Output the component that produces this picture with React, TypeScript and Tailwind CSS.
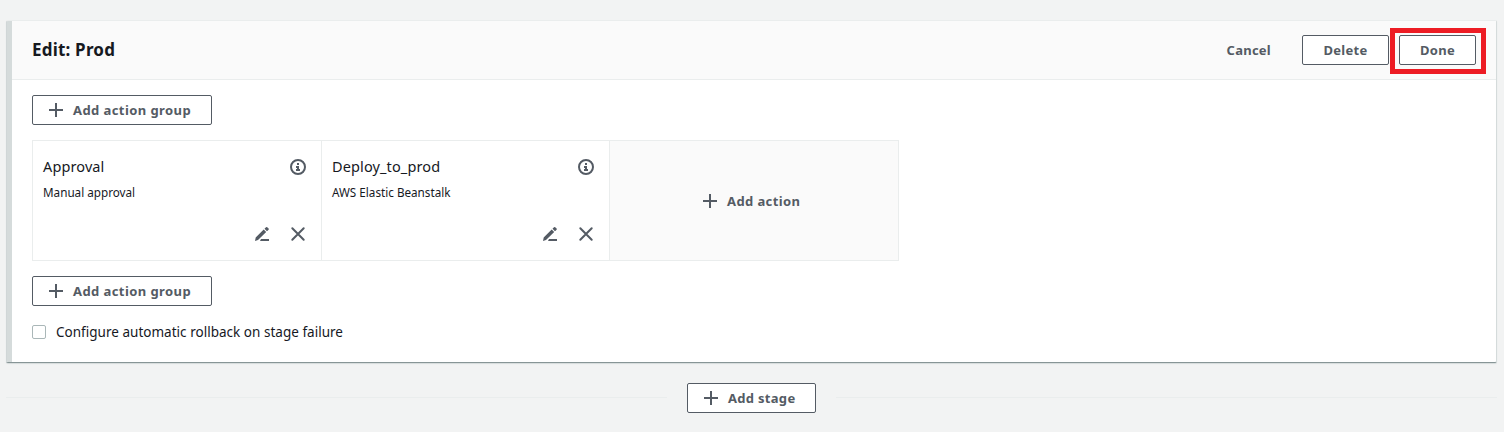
import type { ReactNode } from "react";

function PlusIcon() {
  return (
    <svg className="h-4 w-4 shrink-0" viewBox="0 0 16 16" fill="none" stroke="#545b64" strokeWidth="2" shapeRendering="crispEdges">
      <path d="M8 1v14M1 8h14" />
    </svg>
  );
}

function InfoIcon() {
  return (
    <svg className="h-4 w-4" viewBox="0 0 16 16" fill="none">
      <circle cx="8" cy="8" r="7" stroke="#545b64" strokeWidth="2" />
      <path d="M7 4h2v2H7zM6 7h3v3h1v2H6v-2h1V9H6z" fill="#545b64" />
    </svg>
  );
}

function EditIcon() {
  return (
    <svg className="h-4 w-4" viewBox="0 0 16 16">
      <path d="M1 15l.7-3.6 8-7.9 2.5 2.5-8.2 8zM10.5 2.7L12 1.2q.6-.5 1.2 0l1.4 1.4q.5.5 0 1.1L13 5.2z" fill="#545b64" />
      <path d="M7 13h8v2H6z" fill="#545b64" />
    </svg>
  );
}

function CloseIcon() {
  return (
    <svg className="h-4 w-4" viewBox="0 0 16 16" fill="none" stroke="#545b64" strokeWidth="2" strokeLinecap="round">
      <path d="M2.3 2.3l11.4 11.4M13.7 2.3L2.3 13.7" />
    </svg>
  );
}

function Button({ className, children }: { className: string; children: ReactNode }) {
  return (
    <button
      className={`flex h-[30px] shrink-0 items-center rounded-[2px] border border-[#545b64] bg-white text-[13px] font-bold whitespace-nowrap text-[#545b64] ${className}`}
    >
      {children}
    </button>
  );
}

function AddGroupButton() {
  return (
    <Button className="w-[180px] gap-[9px] pl-[15px]">
      <PlusIcon />
      <span className="pt-[2px] tracking-[0.42px]">Add action group</span>
    </Button>
  );
}

function ActionCard({ name, provider }: { name: ReactNode; provider: ReactNode }) {
  return (
    <div className="flex flex-col justify-between border-r border-[#eaeded] pt-[18px] pr-[15px] pb-[18px] pl-[10px]">
      <div className="flex items-start justify-between">
        <div>
          <div className="h-4 text-[14.5px] leading-[14px] tracking-[0.12px]">{name}</div>
          <div className="mt-[10px] h-4 text-[11.7px] leading-[14px]">{provider}</div>
        </div>
        <InfoIcon />
      </div>
      <div className="flex justify-end gap-5">
        <EditIcon />
        <CloseIcon />
      </div>
    </div>
  );
}

export default function App() {
  return (
    <main className="h-[432px] w-[1504px] overflow-hidden bg-[#f2f3f3] pt-5 pr-[7px] pl-[6px] font-['Noto_Sans',sans-serif] text-[#16191f]">
      <section className="flex h-[343px] overflow-hidden rounded-[2px] border-t border-r border-b border-t-[#eaeded] border-r-[#d5dbdb] border-b-[#879596] bg-white shadow-[0_1px_1px_#d5dbdb]">
        <div className="w-[6px] shrink-0 border-l border-[#d0d6d7] bg-[#d5dbdb]" />
        <div className="flex-1">
          <header className="flex h-[59px] items-center justify-between border-b border-[#eaeded] bg-[#fafafa] px-5">
            <h2 className="text-[17px] leading-6 font-bold tracking-[0.2px]">Edit: Prod</h2>
            <div className="flex items-center">
              <button className="mr-[31px] pt-px text-[13px] font-bold tracking-[0.25px] text-[#545b64]">Cancel</button>
              <Button className="mr-[10px] w-[87px] justify-center pt-px tracking-[0.25px]">Delete</Button>
              <div className="relative">
                <Button className="w-[77px] justify-center pt-px tracking-[0.25px]">Done</Button>
                <div className="pointer-events-none absolute -top-[7px] -left-[9px] h-[46px] w-[96px] border-[5px] border-[#ed1c24]" />
              </div>
            </div>
          </header>
          <div className="pt-[15px] pl-5">
            <AddGroupButton />
            <div className="mt-[15px] grid h-[121px] w-[867px] grid-cols-[289px_288px_288px] border border-[#eaeded]">
              <ActionCard name="Approval" provider="Manual approval" />
              <ActionCard name="Deploy_to_prod" provider="AWS Elastic Beanstalk" />
              <button className="flex items-center gap-[9px] bg-[#fafafa] pt-px pl-[92px] text-[13px] font-bold text-[#545b64]">
                <PlusIcon />
                <span className="pt-px tracking-[0.4px]">Add action</span>
              </button>
            </div>
            <div className="mt-[15px]">
              <AddGroupButton />
            </div>
            <label className="mt-[18px] flex h-4 items-center gap-[10px] text-[13.5px] leading-4 tracking-[0.02px]">
              <input type="checkbox" className="h-[14px] w-[14px] appearance-none rounded-[2px] border border-[#aab7b8] bg-white" />
              <span>Configure automatic rollback on stage failure</span>
            </label>
          </div>
        </div>
      </section>
      <div className="mt-5 flex items-center gap-5">
        <div className="mb-px h-px flex-1 bg-[#eaeded]" />
        <Button className="w-[129px] gap-[9px] pl-[15px]">
          <PlusIcon />
          <span className="pt-[2px] tracking-[0.3px]">Add stage</span>
        </Button>
        <div className="mb-px h-px flex-1 bg-[#eaeded]" />
      </div>
    </main>
  );
}
